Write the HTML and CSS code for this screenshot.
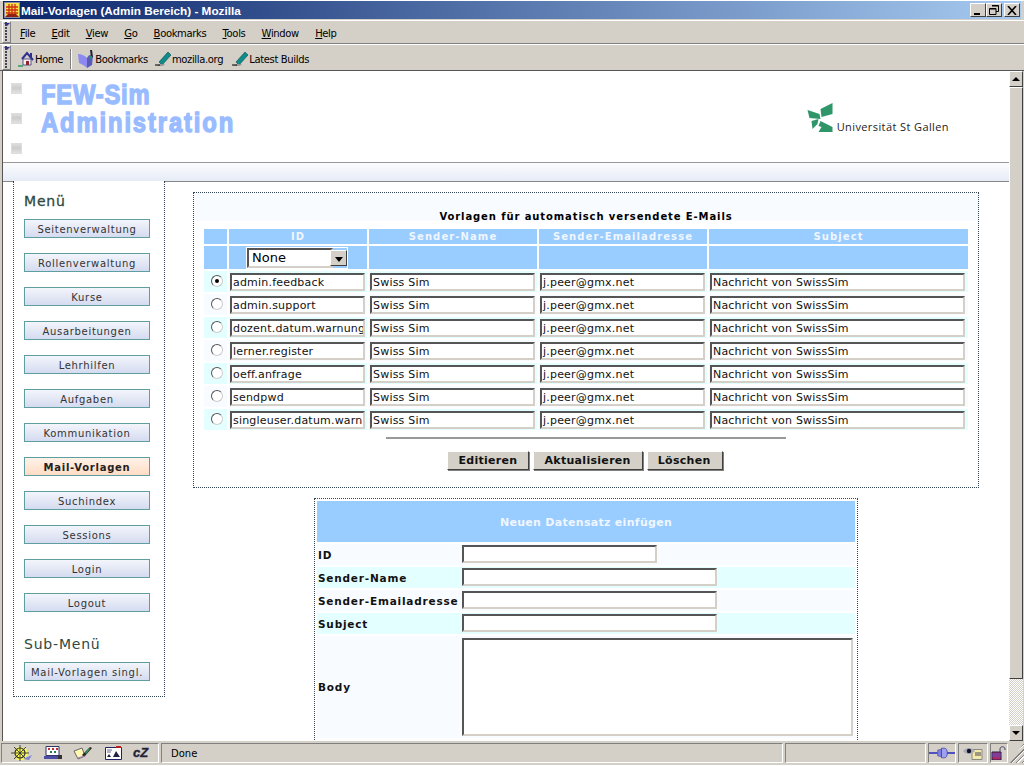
FILE: index.html
```html
<!DOCTYPE html>
<html lang="de">
<head>
<meta charset="utf-8">
<title>Mail-Vorlagen (Admin Bereich) - Mozilla</title>
<link rel="stylesheet" href="styles.css">
</head>
<body>
<div class="window">
  <div class="titlebar">
    <svg class="app-icon" width="16" height="16" viewBox="0 0 16 16"><rect x="0.5" y="0.5" width="15" height="15" fill="#f4e04a" stroke="#8a8aa8"/><path d="M5 2v11M8 2v11M11 2v11M2 5h12M2 8h12M2 11h12" stroke="#d03010" stroke-width="1.3"/><path d="M1 15l3-3h8l3 3z" fill="#902010"/></svg>
    <span class="title-text">Mail-Vorlagen (Admin Bereich) - Mozilla</span>
    <div class="win-buttons">
      <span class="win-btn"><svg width="10" height="9" viewBox="0 0 10 9"><path d="M1 7h6v2H1z" fill="#000"/></svg></span>
      <span class="win-btn"><svg width="10" height="10" viewBox="0 0 10 10"><path d="M3 .5h6.500v6H7M.5 3.500h6.500v6H.5z" fill="none" stroke="#000"/><path d="M3 1h6.500M1 4h6" stroke="#000"/></svg></span>
      <span class="win-btn close"><svg width="10" height="9" viewBox="0 0 10 9"><path d="M1 0l8 9M9 0L1 9" stroke="#000" stroke-width="1.6"/></svg></span>
    </div>
  </div>

  <div class="bar menubar">
    <span class="grip"></span>
    <nav class="menu">
      <span><u>F</u>ile</span><span><u>E</u>dit</span><span><u>V</u>iew</span><span><u>G</u>o</span><span><u>B</u>ookmarks</span><span><u>T</u>ools</span><span><u>W</u>indow</span><span><u>H</u>elp</span>
    </nav>
  </div>

  <div class="bar toolbar">
    <span class="grip"></span>
    <div class="links">
      <span class="link home">
        <svg width="16" height="16" viewBox="0 0 16 16"><path d="M4 8l5-6 6 7" fill="none" stroke="#30308c" stroke-width="2"/><path d="M5 8h8v6H5z" fill="#f6f2e8" stroke="#30308c" stroke-width=".8"/><path d="M8 10h3v4H8z" fill="#902828"/><path d="M12 2h2v4h-2z" fill="#30308c"/><path d="M0 15h5" stroke="#209850" stroke-width="1.4"/></svg>Home
      </span>
      <span class="sep"></span>
      <span class="link books">
        <svg width="17" height="18" viewBox="0 0 17 18"><path d="M0 4c3 0 6 1 9 4v10C6 15 3 14 1 13z" fill="#8c8af0"/><path d="M9 8c1-2 2-3 3-3l3 1-1 9-5 3z" fill="#5c5ab8"/><path d="M12 0l1 8 2-1-1-7z" fill="#223"/><path d="M11 6h3v3h-3z" fill="#209070"/></svg>Bookmarks
      </span>
      <span class="link">
        <svg width="17" height="17" viewBox="0 0 17 17"><path d="M4 11L13 1l3 3-9 10z" fill="#0e8c8c" stroke="#064848" stroke-width=".6"/><path d="M1 15h7l2-2H5z" fill="#999"/><path d="M0 14h5" stroke="#000"/></svg>mozilla.org
      </span>
      <span class="link">
        <svg width="17" height="17" viewBox="0 0 17 17"><path d="M4 11L13 1l3 3-9 10z" fill="#0e8c8c" stroke="#064848" stroke-width=".6"/><path d="M1 15h7l2-2H5z" fill="#999"/><path d="M0 14h5" stroke="#000"/></svg>Latest Builds
      </span>
    </div>
  </div>

  <div class="viewport">
    <div class="page">
      <header class="head">
        <div class="broken-col"><span class="broken"></span><span class="broken"></span><span class="broken"></span></div>
        <div class="brand"><span class="brand-a">FEW-Sim</span><span class="brand-b">Administration</span></div>
        <div class="logo">
          <svg width="27" height="29" viewBox="0 0 26 29"><path d="M0 7l12 4 1 5-11-1zM25 0v11l-11 3-1-8zM4 18l7-2-1 5-5 5zM13 18l12 6v5H11l3-5-3-1z" fill="#2e9668"/></svg>
          <span class="logo-text">Universität St Gallen</span>
        </div>
      </header>
      <div class="strip"></div>

      <div class="content">
        <aside class="side">
          <h3 class="side-title">Menü</h3>
          <a class="nav-btn">Seitenverwaltung</a>
          <a class="nav-btn">Rollenverwaltung</a>
          <a class="nav-btn">Kurse</a>
          <a class="nav-btn">Ausarbeitungen</a>
          <a class="nav-btn">Lehrhilfen</a>
          <a class="nav-btn">Aufgaben</a>
          <a class="nav-btn">Kommunikation</a>
          <a class="nav-btn active">Mail-Vorlagen</a>
          <a class="nav-btn">Suchindex</a>
          <a class="nav-btn">Sessions</a>
          <a class="nav-btn">Login</a>
          <a class="nav-btn">Logout</a>
          <h3 class="side-title sub">Sub-Menü</h3>
          <a class="nav-btn last">Mail-Vorlagen singl.</a>
        </aside>

        <main class="main">
          <section class="panel">
            <h4 class="panel-title">Vorlagen für automatisch versendete E-Mails</h4>
            <table class="list">
              <colgroup><col class="c0"><col class="c1"><col class="c2"><col class="c3"><col class="c4"></colgroup>
              <tr class="hd"><th></th><th>ID</th><th>Sender-Name</th><th>Sender-Emailadresse</th><th>Subject</th></tr>
              <tr class="filter"><td></td><td><span class="select"><span class="select-val">None</span><span class="select-arrow"></span></span></td><td></td><td></td><td></td></tr>
              <tr class="r1"><td><span class="radio on"></span></td><td><span class="inp">admin.feedback</span></td><td><span class="inp">Swiss Sim</span></td><td><span class="inp">j.peer@gmx.net</span></td><td><span class="inp">Nachricht von SwissSim</span></td></tr>
              <tr class="r2"><td><span class="radio"></span></td><td><span class="inp">admin.support</span></td><td><span class="inp">Swiss Sim</span></td><td><span class="inp">j.peer@gmx.net</span></td><td><span class="inp">Nachricht von SwissSim</span></td></tr>
              <tr class="r1"><td><span class="radio"></span></td><td><span class="inp">dozent.datum.warnung</span></td><td><span class="inp">Swiss Sim</span></td><td><span class="inp">j.peer@gmx.net</span></td><td><span class="inp">Nachricht von SwissSim</span></td></tr>
              <tr class="r2"><td><span class="radio"></span></td><td><span class="inp">lerner.register</span></td><td><span class="inp">Swiss Sim</span></td><td><span class="inp">j.peer@gmx.net</span></td><td><span class="inp">Nachricht von SwissSim</span></td></tr>
              <tr class="r1"><td><span class="radio"></span></td><td><span class="inp">oeff.anfrage</span></td><td><span class="inp">Swiss Sim</span></td><td><span class="inp">j.peer@gmx.net</span></td><td><span class="inp">Nachricht von SwissSim</span></td></tr>
              <tr class="r2"><td><span class="radio"></span></td><td><span class="inp">sendpwd</span></td><td><span class="inp">Swiss Sim</span></td><td><span class="inp">j.peer@gmx.net</span></td><td><span class="inp">Nachricht von SwissSim</span></td></tr>
              <tr class="r1"><td><span class="radio"></span></td><td><span class="inp">singleuser.datum.warn</span></td><td><span class="inp">Swiss Sim</span></td><td><span class="inp">j.peer@gmx.net</span></td><td><span class="inp">Nachricht von SwissSim</span></td></tr>
            </table>
            <div class="rule"></div>
            <div class="actions"><span class="btn">Editieren</span><span class="btn">Aktualisieren</span><span class="btn">Löschen</span></div>
          </section>

          <section class="form">
            <div class="form-head">Neuen Datensatz einfügen</div>
            <div class="frow r2"><label>ID</label><span class="inp short"></span></div>
            <div class="frow r1"><label>Sender-Name</label><span class="inp long"></span></div>
            <div class="frow r2"><label>Sender-Emailadresse</label><span class="inp long"></span></div>
            <div class="frow r1"><label>Subject</label><span class="inp long"></span></div>
            <div class="frow r2 body-row"><label>Body</label><span class="inp area"></span></div>
          </section>
        </main>
      </div>
    </div>

    <div class="scrollbar">
      <span class="sb-btn"><i class="tri up"></i></span>
      <span class="sb-thumb"></span>
      <span class="sb-track"></span>
      <span class="sb-btn"><i class="tri down"></i></span>
    </div>
  </div>

  <footer class="status">
    <div class="st-icons">
      <svg width="22" height="16" viewBox="0 0 22 16"><path d="M4 8l3-6 9 1 2 6-4 6H7z" fill="#ffff50"/><circle cx="10" cy="8" r="5" fill="none" stroke="#333" stroke-width="1.200"/><path d="M10 0v16M1 8h18M4 2l12 12M16 2L4 14" stroke="#333" stroke-width=".9"/><path d="M13 14l9-4-3 5z" fill="#8484d4"/></svg>
      <svg width="18" height="14" viewBox="0 0 18 14"><path d="M2 .5h13v9H2z" fill="#fff" stroke="#336"/><path d="M4 2h2v2H4zM8 2h2v2H8zM12 2h2v2h-2z" fill="#c03030"/><path d="M6 5h2v2H6zM10 5h2v2h-2z" fill="#208050"/><path d="M0 10h14v3H0z" fill="#4c4ca0"/><path d="M14 9h4v4h-4z" fill="#333"/></svg>
      <svg width="20" height="14" viewBox="0 0 20 14"><path d="M1 5l8-3 3 8-7 3z" fill="#fff8b0" stroke="#666"/><path d="M9 9l8-8 2 1-8 9z" fill="#222"/><path d="M12 7l4-5 1 1-4 5z" fill="#30a060"/><path d="M4 12l8-2" stroke="#b080c0"/></svg>
      <svg width="17" height="14" viewBox="0 0 17 14"><path d="M.5 1.500h16v12H.5z" fill="#fff" stroke="#226"/><path d="M11 0h5v2h-5z" fill="#c02020"/><path d="M8 11l3-6 4 6zM2 11l2-3 2 3z" fill="#224"/><path d="M2 4h5M2 6h4" stroke="#668"/></svg>
      <span class="cz">cZ</span>
    </div>
    <div class="st-done">Done</div>
    <div class="st-empty"></div>
    <div class="st-net"><svg width="27" height="12" viewBox="0 0 27 12"><path d="M0 5h9v2H0zM18 5h9v2h-9z" fill="#5050c0"/><path d="M9 3l4-1v8l-4-1z" fill="#8080e0" stroke="#303090" stroke-width=".5"/><path d="M13 1h3c2 0 3 2 3 5s-1 5-3 5h-3z" fill="#a0a0f0" stroke="#303090" stroke-width=".7"/></svg></div>
    <div class="st-eye"><svg width="20" height="13" viewBox="0 0 20 13"><path d="M9 2.500h10v10H9z" fill="#f4eaa8" stroke="#888"/><path d="M12 6h6M12 8h6" stroke="#445"/><path d="M0 4c3-4 9-4 12 0-3 4-9 4-12 0z" fill="#aab"/><circle cx="6" cy="4" r="2.200" fill="#112"/></svg></div>
    <div class="st-lock"><svg width="16" height="14" viewBox="0 0 16 14"><path d="M1 6h9v8H1z" fill="#b02868" stroke="#224"/><path d="M1 8h9M1 10h9" stroke="#5555c0"/><path d="M9 6V3c0-3 5-3 5 0v1" fill="none" stroke="#446"/></svg></div>
    <div class="st-grip"></div>
  </footer>
</div>
</body>
</html>
```

FILE: styles.css
```css
* { box-sizing: border-box; }
html, body { margin: 0; height: 100%; overflow: hidden; }
body { font-family: "DejaVu Sans", Verdana, sans-serif; background: #d4d0c8; color: #000; }
.window { width: 1024px; height: 766px; display: flex; flex-direction: column; background: #d4d0c8; border-top: 1px solid #fff; }

.titlebar { height: 18px; margin: 0 3px; display: flex; align-items: center; background: linear-gradient(90deg, #0a246a, #a6caf0); flex: none; padding-left: 1px; }
.title-text { color: #fff; font: bold 11.75px "Liberation Sans", Arial, sans-serif; margin-left: 1px; white-space: nowrap; }
.win-buttons { margin-left: auto; display: flex; margin-right: 1px; }
.win-btn { width: 16px; height: 14px; background: #d4d0c8; border: 1px solid; border-color: #fff #404040 #404040 #fff; display: flex; align-items: center; justify-content: center; }
.win-btn.close { margin-left: 2px; }

.bar { display: flex; align-items: center; flex: none; border-top: 1px solid #fff; border-bottom: 1px solid #808080; font: 10px "DejaVu Sans", Verdana, sans-serif; letter-spacing: -.35px; }
.menubar { height: 24px; margin-top: 1px; }
.toolbar { height: 27px; border-bottom: 1px solid #555; }
.grip { width: 9px; align-self: stretch; margin: 0 3px 0 2px; flex: none; border: 1px solid; border-color: #fff #808080 #808080 #fff; position: relative; background: radial-gradient(circle at 1px 1px, #445 .8px, transparent 1px) 2px 8px / 3px 3px repeat-y; }
.grip::before { content: ""; position: absolute; left: 1px; top: 1px; border: 3px solid transparent; border-top: 3px solid #30308c; border-bottom: 0; }
.menu { display: flex; gap: 16.2px; padding: 2px 0 0 6px; }
.menu span { white-space: nowrap; }
.links { display: flex; align-items: center; height: 100%; padding: 3px 0 0 4px; }
.link { display: flex; align-items: center; margin-right: 9px; white-space: nowrap; }
.link svg { flex: none; }
.home { margin-right: 7px; }
.home svg { margin-right: 1px; }
.books { margin-right: 7px; }
.sep { width: 2px; height: 20px; background: #808080; border-right: 1px solid #fff; margin-right: 6px; }

.viewport { flex: 1; min-height: 0; display: flex; background: #fff; border-left: 1px solid #555; margin: 0 1px 0 2px; overflow: hidden; }
.page { flex: 1; min-width: 0; overflow: hidden; }
.head { height: 92px; display: flex; position: relative; border-bottom: 1px solid #999; background: #fff; }
.broken-col { display: flex; flex-direction: column; gap: 19px; padding: 12px 0 0 8px; width: 38px; flex: none; }
.broken { width: 11px; height: 11px; background: linear-gradient(#ddd, #ccc 45%, #e2e2e2); border: 1px solid #ddd; display: block; }
.brand { font: bold 28px/28px "Liberation Sans", Arial, sans-serif; color: #99bbff; -webkit-text-stroke: 1.4px #99bbff; padding-top: 9.5px; white-space: nowrap; transform: scaleX(.85); transform-origin: left top; }
.brand-a { display: block; letter-spacing: .9px; }
.brand-b { display: block; letter-spacing: 2.2px; }
.logo { margin-left: auto; margin-right: 60px; margin-top: 31px; display: flex; align-items: flex-end; height: 30px; }
.logo-text { font: 11px "Open Sans", sans-serif; color: #222; margin: 0 0 -2px 3px; letter-spacing: .4px; white-space: nowrap; line-height: 14px; }
.strip { height: 19px; background: linear-gradient(#fbfcfe, #e6ebf6); border-bottom: 1px solid #888; }

.content { display: flex; align-items: flex-start; padding-left: 10px; }
.side { width: 152px; height: 516px; flex: none; border: 1px dotted #345; border-top: 0; padding: 11px 10px 0; background: #fff; margin-top: -1px; }
.side-title { margin: 0 0 9px; font: 14px/18px "DejaVu Sans", Verdana, sans-serif; color: #2f4a40; letter-spacing: .8px; -webkit-text-stroke: .3px #2f4a40; }
.side-title.sub { margin: 23px 0 9px; -webkit-text-stroke: 0; }
.nav-btn { display: block; width: 126px; height: 19px; margin-bottom: 15px; border: 1px solid #5f9ea0; background: linear-gradient(#f3f5fb, #d5dcf0); font: 10px/19px "DejaVu Sans", Verdana, sans-serif; letter-spacing: .7px; text-align: center; color: #333; white-space: nowrap; overflow: hidden; }
.nav-btn.active { background: linear-gradient(#fff2e8, #ffdcc4); font-weight: bold; color: #222; letter-spacing: .75px; }
.nav-btn.last { letter-spacing: .75px; margin: 0; }

.main { flex: 1; min-width: 0; padding: 10px 0 0 28px; }
.panel { width: 786px; height: 296px; border: 1px dotted #345; padding: 1px 0 0 0; background: linear-gradient(#f8fbff 0 28px, #fff 28px); }
.panel-title { margin: 16px 0 3px; height: 14px; text-align: center; font: bold 10px/14px "DejaVu Sans", Verdana, sans-serif; letter-spacing: .9px; }
.list { border-collapse: separate; border-spacing: 2px; table-layout: fixed; margin-left: 8px; width: 768px; }
.list td, .list th { padding: 0; }
.c0 { width: 23px; }
.c1 { width: 138px; }
.c2 { width: 168px; }
.c3 { width: 168px; }
.c4 { width: 259px; }
.hd th { height: 15px; background: #99ccff; color: #f0f6ff; font: bold 10px/15px "DejaVu Sans", Verdana, sans-serif; letter-spacing: 1.1px; }
.filter td { height: 23px; background: #99ccff; }
.r1 td, .r1 { background: #e4ffff; }
.r2 td, .r2 { background: #f8fbff; }
.list .r1 td, .list .r2 td { height: 21px; vertical-align: middle; text-align: center; }
.select { display: flex; width: 102px; height: 22px; margin: 0 0 0 17px; border: 1px solid #fff; }
.select-val { flex: 1; border: 2px solid; border-color: #555 #d4d0c8 #d4d0c8 #555; background: #fff; font: 13px/15px "DejaVu Sans", Verdana, sans-serif; padding-left: 3px; text-align: left; }
.select-arrow { width: 17px; background: #d4d0c8; border: 1px solid; border-color: #fff #404040 #404040 #fff; position: relative; margin: 2px 0 2px -3px; }
.select-arrow::after { content: ""; position: absolute; left: 4px; top: 6px; border: 4px solid transparent; border-top: 5px solid #000; border-bottom: 0; }
.radio { display: inline-block; width: 12px; height: 12px; border-radius: 50%; background: #fff; border: 1px solid; border-color: #555 #ccc #ccc #555; position: relative; margin-top: -3px; vertical-align: middle; left: 1px; }
.radio.on::after { content: ""; position: absolute; left: 3px; top: 3px; width: 4px; height: 4px; border-radius: 50%; background: #000; }
.inp { display: block; height: 18px; border: 2px solid; border-color: #555 #d4d0c8 #d4d0c8 #555; background: #fff; font: 11px/15px "DejaVu Sans", Verdana, sans-serif; letter-spacing: .2px; text-align: left; padding-left: 1px; white-space: nowrap; overflow: hidden; color: #111; }
.list .inp { margin: 0 2px 0 1px; }
.list tr td:last-child .inp { margin-right: 3px; }
.rule { width: 400px; height: 2px; background: #999; margin: 5px 0 0 192px; }
.actions { display: flex; justify-content: center; gap: 4px; padding-top: 12px; margin-left: -2px; }
.btn { height: 19px; padding: 0 11px 0 10px; background: #d4d0c8; border: 1px solid; border-color: #fff #404040 #404040 #fff; box-shadow: 1px 1px 0 #808080; font: bold 11px/17px "DejaVu Sans", Verdana, sans-serif; letter-spacing: .3px; color: #111; }

.form { width: 544px; margin: 10px 0 0 121px; border: 1px dotted #345; border-bottom: 0; padding: 2px; height: 300px; background: #fff; }
.form-head { height: 41px; background: #99ccff; color: #f0f6ff; font: bold 11px/43px "DejaVu Sans", Verdana, sans-serif; letter-spacing: .3px; text-align: center; margin-bottom: 2px; }
.frow { display: flex; align-items: center; height: 21px; margin-bottom: 2px; }
.frow .short, .frow .long { margin-bottom: 1px; }
.frow label { width: 145px; font: bold 10.5px "DejaVu Sans", Verdana, sans-serif; letter-spacing: .8px; padding-left: 1px; flex: none; white-space: nowrap; color: #111; }
.short { width: 195px; }
.long { width: 255px; }
.body-row { height: 102px; }
.area { width: 391px; height: 98px; }

.scrollbar { width: 14px; flex: none; display: flex; flex-direction: column; background: #d4d0c8; }
.sb-btn { height: 16px; flex: none; background: #d4d0c8; border: 1px solid; border-color: #fff #404040 #404040 #fff; display: flex; align-items: center; justify-content: center; }
.tri { display: block; border: 4px solid transparent; }
.tri.up { border-bottom: 4px solid #000; border-top: 0; }
.tri.down { border-top: 4px solid #000; border-bottom: 0; }
.sb-thumb { height: 592px; flex: none; background: #d4d0c8; border: 1px solid; border-color: #fff #404040 #404040 #fff; }
.sb-track { flex: 1; background: repeating-conic-gradient(#d4d0c8 0 25%, #fff 0 50%) 0 0 / 2px 2px; }

.status { height: 25px; flex: none; display: flex; font: 10px "DejaVu Sans", Verdana, sans-serif; padding: 2px 0 3px 1px; border-bottom: 1px solid #fff; }
.status > div { border: 1px solid; border-color: #808080 #fff #fff #808080; height: 20px; margin-right: 2px; display: flex; align-items: center; flex: none; }
.st-icons { width: 158px; padding-left: 8px; gap: 11.5px; }
.cz { font: italic bold 13px/12px "Liberation Sans", sans-serif; color: #223; -webkit-text-stroke: .3px #224; width: 16px; }
.st-done { width: 622px; padding-left: 9px; }
.st-empty { width: 141px; }
.st-net { width: 28px; justify-content: center; }
.st-eye { width: 30px; justify-content: center; }
.st-lock { width: 18px; justify-content: center; }
.status > .st-grip { border: 0; width: 14px; margin: 0; background: repeating-linear-gradient(135deg, transparent 0 2px, #808080 2px 3px, #fff 3px 4px); clip-path: polygon(100% 0, 100% 100%, 0 100%); }
```
